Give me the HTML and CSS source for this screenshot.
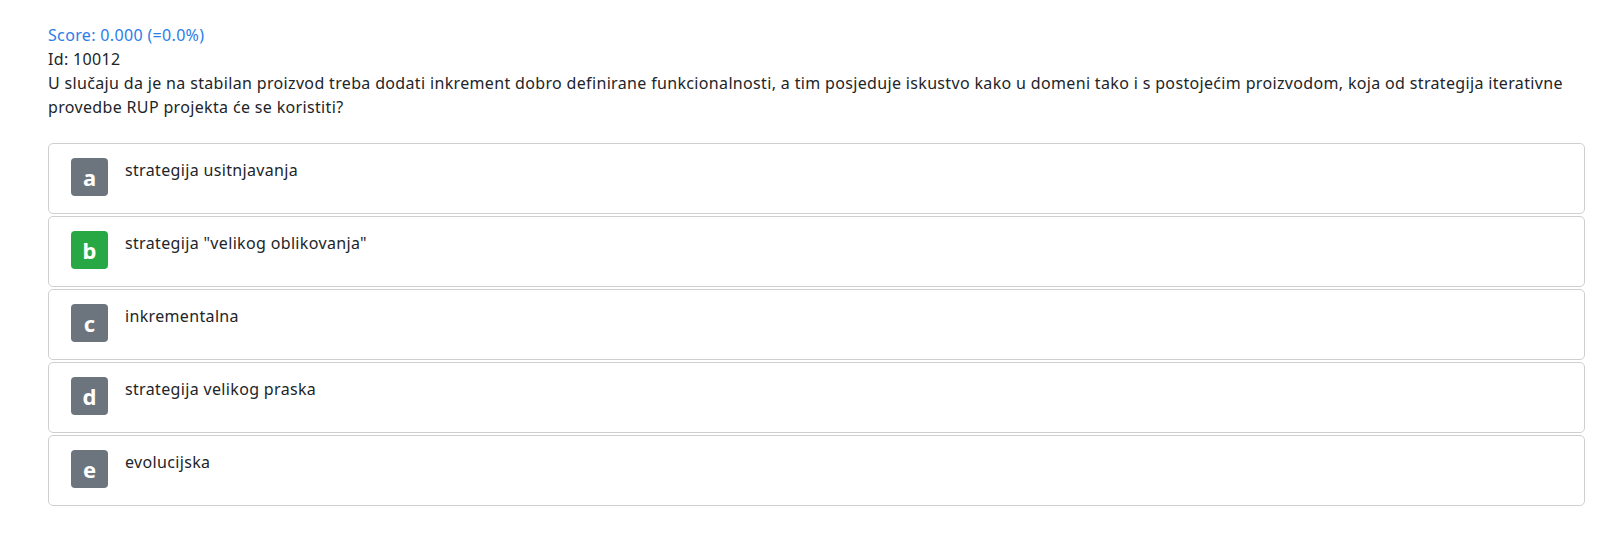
FILE: index.html
```html
<!DOCTYPE html>
<html lang="hr">
<head>
<meta charset="utf-8">
<title>Pitanje</title>
<link rel="stylesheet" href="styles.css">
</head>
<body>
<div class="page">
  <div class="score">Score: 0.000 (=0.0%)</div>
  <div class="qid">Id: 10012</div>
  <div class="question">U slučaju da je na stabilan proizvod treba dodati inkrement dobro definirane funkcionalnosti, a tim posjeduje iskustvo kako u domeni tako i s postojećim proizvodom, koja od strategija iterativne provedbe RUP projekta će se koristiti?</div>
  <div class="answers">
    <div class="answer"><span class="badge">a</span><span class="atext">strategija usitnjavanja</span></div>
    <div class="answer"><span class="badge correct">b</span><span class="atext">strategija "velikog oblikovanja"</span></div>
    <div class="answer"><span class="badge">c</span><span class="atext">inkrementalna</span></div>
    <div class="answer"><span class="badge">d</span><span class="atext">strategija velikog praska</span></div>
    <div class="answer"><span class="badge">e</span><span class="atext">evolucijska</span></div>
  </div>
</div>
</body>
</html>
```
FILE: styles.css
```css
html, body {
  margin: 0;
  padding: 0;
  background: #ffffff;
}
body {
  font-family: "Noto Sans", "Open Sans", sans-serif;
  font-size: 16px;
  letter-spacing: 0.34px;
  line-height: 24px;
  color: #212529;
}
.page {
  padding: 23px 15px 0 48px;
}
.score {
  color: #2b7de9;
}
.question {
  margin-bottom: 24px;
}
.answers {
  display: flex;
  flex-direction: column;
  gap: 2px;
}
.answer {
  display: flex;
  align-items: flex-start;
  border: 1px solid #cfcfcf;
  border-radius: 5px;
  padding: 14px 20px 17px 22px;
}
.badge {
  flex: 0 0 auto;
  width: 37px;
  height: 38px;
  border-radius: 4px;
  background: #6c757d;
  color: #ffffff;
  font-weight: 700;
  font-size: 22px;
  letter-spacing: 0;
  line-height: 38px;
  text-align: center;
  margin-right: 17px;
}
.badge.correct {
  background: #28a745;
}
.atext {
  padding-top: 0;
}
```
